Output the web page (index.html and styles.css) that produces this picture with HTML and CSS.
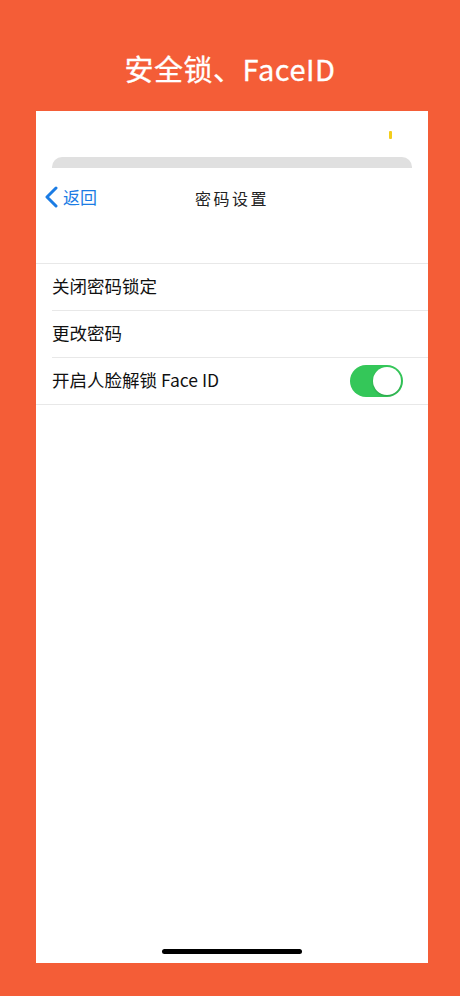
FILE: index.html
```html
<!DOCTYPE html>
<html lang="zh">
<head>
<meta charset="utf-8">
<link rel="stylesheet" href="styles.css">
</head>
<body>
<div class="page">
  <header class="header"><h1 class="headline">安全锁、FaceID</h1></header>
  <main class="phone">
    <div class="status"><span class="status-dot"></span></div>
    <div class="sheet-top"></div>
    <nav class="nav">
      <a class="back">
        <svg class="chev" width="16" height="22" viewBox="0 0 16 22"><path d="M13 2 L4 11 L13 20" fill="none" stroke="#1b7ce4" stroke-width="3" stroke-linecap="round" stroke-linejoin="round"/></svg>
        <span>返回</span>
      </a>
      <div class="nav-title">密码设置</div>
    </nav>
    <ul class="list">
      <li class="row"><span>关闭密码锁定</span></li>
      <li class="row"><span>更改密码</span></li>
      <li class="row last"><span>开启人脸解锁 Face ID</span><span class="toggle"><span class="knob"></span></span></li>
    </ul>
    <div class="home"></div>
  </main>
</div>
</body>
</html>
```
FILE: styles.css
```css
* { box-sizing: border-box; }
html, body { margin: 0; padding: 0; }
body {
  background: #f45d37;
  font-family: "Noto Sans CJK SC", "Noto Sans", sans-serif;
}
.page { width: 460px; height: 996px; display: flex; flex-direction: column; }
.header { height: 111px; display: flex; justify-content: center; }
.headline {
  margin: 0;
  padding-top: 47px;
  font-size: 29px;
  line-height: 42px;
  font-weight: 400;
  color: #fff;
  letter-spacing: 0.5px;
  -webkit-text-stroke: 0.3px #fff;
}
.phone {
  margin: 0 32px 0 36px;
  height: 852px;
  background: #fff;
  display: flex;
  flex-direction: column;
}
.status { height: 46px; display: flex; justify-content: flex-end; padding: 20px 36px 0 0; }
.status-dot { width: 3px; height: 8px; background: #f3cd1c; border-radius: 1px; }
.sheet-top { height: 11px; margin: 0 16px; background: #e0e0e0; border-radius: 10px 10px 0 0; }
.nav { height: 60px; position: relative; display: flex; align-items: center; justify-content: center; }
.back {
  position: absolute; left: 7px; top: 18px;
  display: flex; align-items: center; gap: 4px;
  color: #1b7ce4; font-size: 17px; line-height: 22px;
}
.chev { display: block; }
.nav-title { font-size: 16px; letter-spacing: 2.5px; color: #222; font-weight: 400; font-family: "Noto Sans CJK SC", serif; }
.list { list-style: none; margin: 35px 0 0; padding: 0; border-top: 1px solid #e8e8e8; }
.row {
  height: 47px; margin-left: 16px; padding-right: 25px; padding-bottom: 3px;
  display: flex; align-items: center; justify-content: space-between;
  border-bottom: 1px solid #e8e8e8;
  font-size: 17.5px; color: #111;
}
.row.last { margin-left: 0; padding-left: 16px; padding-bottom: 0; }
.row.last > span:first-child { margin-bottom: 3px; }
.toggle {
  width: 53px; height: 32px; border-radius: 16px; background: #34c759;
  display: flex; justify-content: flex-end; align-items: center; padding: 2px;
}
.knob { width: 28px; height: 28px; border-radius: 50%; background: #fff; box-shadow: 0 1px 2px rgba(0,0,0,.2); }
.home { margin: auto auto 9px; width: 140px; height: 5px; border-radius: 3px; background: #000; }
```
